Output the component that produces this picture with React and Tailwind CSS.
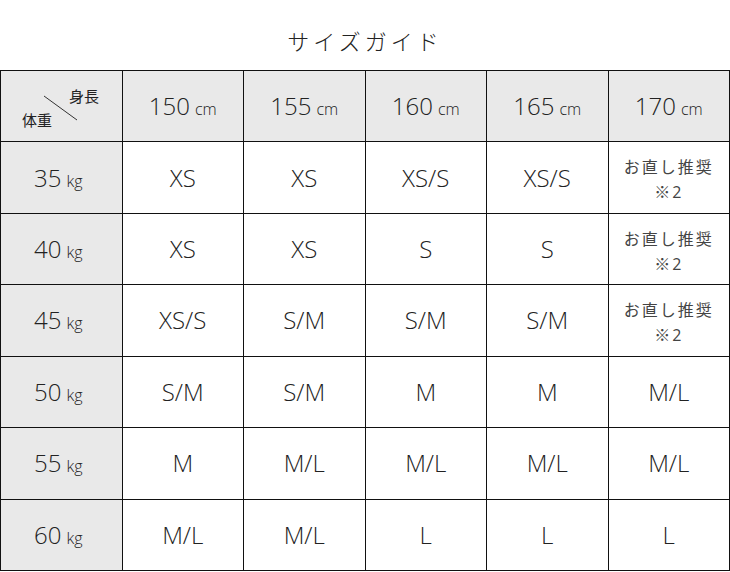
const heights = [150, 155, 160, 165, 170];

const rows = [
  { kg: 35, sizes: ["XS", "XS", "XS/S", "XS/S", null] },
  { kg: 40, sizes: ["XS", "XS", "S", "S", null] },
  { kg: 45, sizes: ["XS/S", "S/M", "S/M", "S/M", null] },
  { kg: 50, sizes: ["S/M", "S/M", "M", "M", "M/L"] },
  { kg: 55, sizes: ["M", "M/L", "M/L", "M/L", "M/L"] },
  { kg: 60, sizes: ["M/L", "M/L", "L", "L", "L"] },
];

const font = { fontFamily: '"Open Sans", "Noto Sans CJK JP", sans-serif' };

const Cell = ({ gray, children }) => (
  <div
    className={`flex items-center justify-center border-r border-b border-[#111] ${
      gray ? "bg-[#e9e9e9]" : "bg-white"
    }`}
  >
    {children}
  </div>
);

const Measure = ({ value, unit, shift }) => (
  <span className={`text-[24px] font-light leading-none text-[#222] ${shift ? "-ml-[6px]" : ""}`}>
    {value}
    <span className="ml-[5px] text-[16px]">{unit}</span>
  </span>
);

export default function App() {
  return (
    <div className="h-[572px] w-[730px] bg-white" style={font}>
      <div className="flex h-[70px] items-start justify-center pt-[30px]">
        <h1 className="text-[22px] font-light leading-none tracking-[4px] text-[#222]">
          サイズガイド
        </h1>
      </div>
      <div className="grid h-[501px] w-[730px] grid-cols-6 grid-rows-7 border-t border-l border-[#111]">
        <Cell gray>
          <div className="relative h-full w-full">
            <span className="absolute top-[14px] left-[68px] text-[15px] text-[#222]">身長</span>
            <span className="absolute top-[38px] left-[21px] text-[15px] text-[#222]">体重</span>
            <svg className="absolute top-0 left-0" width="121" height="70">
              <line x1="43" y1="25" x2="76" y2="49" stroke="#333" strokeWidth="1" />
            </svg>
          </div>
        </Cell>
        {heights.map((h) => (
          <Cell gray key={h}>
            <Measure value={h} unit="cm" />
          </Cell>
        ))}
        {rows.map((r) => [
          <Cell gray key={`kg${r.kg}`}>
            <Measure value={r.kg} unit="kg" shift />
          </Cell>,
          ...r.sizes.map((s, i) => (
            <Cell key={`${r.kg}-${i}`}>
              {s ? (
                <span className="text-[24px] font-light leading-none text-[#222]">{s}</span>
              ) : (
                <div className="flex flex-col items-center pt-[5px] text-[16px] leading-[25px] tracking-[2px] text-[#444]">
                  <span>お直し推奨</span>
                  <span>※2</span>
                </div>
              )}
            </Cell>
          )),
        ])}
      </div>
    </div>
  );
}
